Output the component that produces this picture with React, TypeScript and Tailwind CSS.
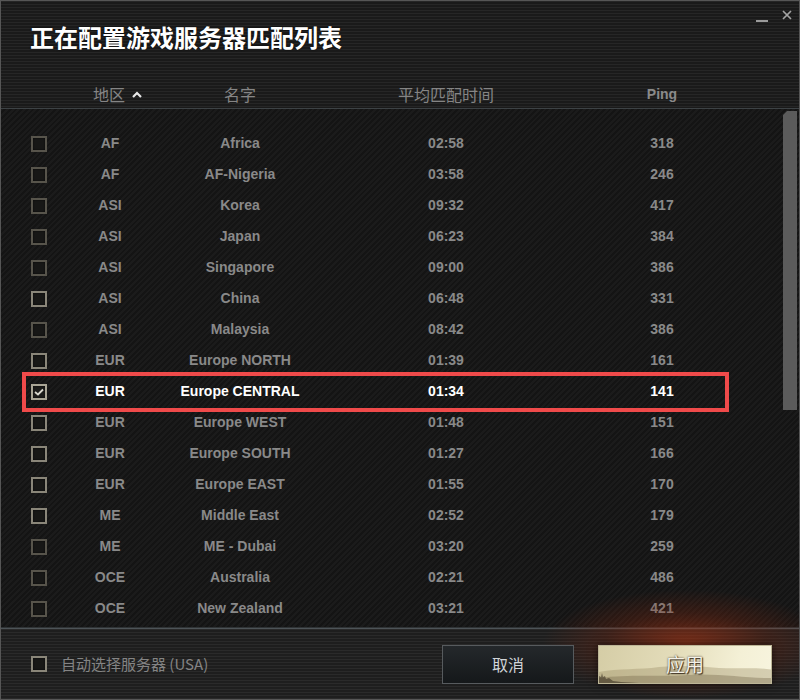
import React from "react";

type Row = { r: string; n: string; t: string; p: string; bright?: boolean; sel?: boolean };

const rows: Row[] = [
  { r: "AF", n: "Africa", t: "02:58", p: "318" },
  { r: "AF", n: "AF-Nigeria", t: "03:58", p: "246" },
  { r: "ASI", n: "Korea", t: "09:32", p: "417" },
  { r: "ASI", n: "Japan", t: "06:23", p: "384" },
  { r: "ASI", n: "Singapore", t: "09:00", p: "386" },
  { r: "ASI", n: "China", t: "06:48", p: "331", bright: true },
  { r: "ASI", n: "Malaysia", t: "08:42", p: "386" },
  { r: "EUR", n: "Europe NORTH", t: "01:39", p: "161", bright: true },
  { r: "EUR", n: "Europe CENTRAL", t: "01:34", p: "141", sel: true },
  { r: "EUR", n: "Europe WEST", t: "01:48", p: "151", bright: true },
  { r: "EUR", n: "Europe SOUTH", t: "01:27", p: "166", bright: true },
  { r: "EUR", n: "Europe EAST", t: "01:55", p: "170", bright: true },
  { r: "ME", n: "Middle East", t: "02:52", p: "179", bright: true },
  { r: "ME", n: "ME - Dubai", t: "03:20", p: "259" },
  { r: "OCE", n: "Australia", t: "02:21", p: "486" },
  { r: "OCE", n: "New Zealand", t: "03:21", p: "421" },
];

function Box({ checked, bright }: { checked?: boolean; bright?: boolean }) {
  const cls = checked
    ? "w-[16px] h-[16px] border-2 border-[#a9a595] bg-[#1c1c1a] flex items-center justify-center shadow-[inset_0_0_2px_rgba(0,0,0,0.8)]"
    : bright
    ? "w-[16px] h-[16px] border-2 border-[#8a8679] bg-[#181816] flex items-center justify-center shadow-[inset_0_0_2px_rgba(0,0,0,0.8)]"
    : "w-[16px] h-[16px] border-2 border-[#57544b] bg-[#171716] flex items-center justify-center shadow-[inset_0_0_2px_rgba(0,0,0,0.8)]";
  return (
    <div className={cls}>
      {checked && (
        <svg width="10" height="8" viewBox="0 0 10 8">
          <polyline points="1,4 4,6.5 9,1.5" fill="none" stroke="#d8d6cc" strokeWidth="1.8" />
        </svg>
      )}
    </div>
  );
}

export default function App() {
  const font = { fontFamily: '"Liberation Sans", "Noto Sans CJK SC", sans-serif' };
  const cjk = { fontFamily: '"Noto Sans CJK SC", "Liberation Sans", sans-serif' };
  return (
    <div
      className="w-[800px] h-[700px] border border-[#565656] flex flex-col overflow-hidden relative bg-[#1c1c1c]"
      style={font}
    >
      {/* Header */}
      <div className="h-[107px] relative flex flex-col bg-[repeating-linear-gradient(to_bottom,#262626_0px,#262626_1px,#1a1a1a_1px,#1a1a1a_3px)]">
        <div className="pl-[29px] pt-[20px] h-[80px]">
          <h1
            className="text-[24px] leading-[32px] font-bold text-white [text-shadow:0_0_2px_rgba(0,0,0,0.9)]"
            style={cjk}
          >
            正在配置游戏服务器匹配列表
          </h1>
        </div>
        {/* window controls */}
        <div className="absolute top-[7px] right-[7px] flex items-center gap-[14px]">
          <div className="w-[12px] h-[2px] bg-[#9a9a9a] mt-[12px]" />
          <svg width="10" height="10" viewBox="0 0 10 10">
            <path d="M1 1 L9 9 M9 1 L1 9" stroke="#a4a4a4" strokeWidth="1.7" />
          </svg>
        </div>
        {/* column headers */}
        <div className="flex items-center h-[26px] text-[16px] text-[#858585]" style={cjk}>
          <div className="w-[69px]" />
          <div className="w-[80px] flex items-center pl-[23px] gap-[7px]">
            <span>地区</span>
            <svg width="10" height="7" viewBox="0 0 10 7">
              <polyline points="1,6 5,2 9,6" fill="none" stroke="#e8e8e8" strokeWidth="2.2" />
            </svg>
          </div>
          <div className="w-[180px] text-center">名字</div>
          <div className="w-[232px] text-center">平均匹配时间</div>
          <div className="w-[200px] text-center text-[14px] font-bold text-[#8a8a8a]" style={font}>
            Ping
          </div>
        </div>
      </div>
      <div className="h-[1px] bg-[#3d4245]" />

      {/* List */}
      <div className="h-[518px] relative flex bg-[repeating-linear-gradient(135deg,#1b1b1b_0px,#1b1b1b_2px,#141414_2px,#141414_4px)]">
        <div className="flex-1 pt-[19px] flex flex-col">
          {rows.map((row, i) => (
            <div
              key={i}
              className={
                row.sel
                  ? "h-[31px] flex items-center text-[14px] font-bold text-white"
                  : "h-[31px] flex items-center text-[14px] font-bold text-[#898989]"
              }
            >
              <div className="w-[30px]" />
              <Box checked={row.sel} bright={row.bright} />
              <div className="w-[23px]" />
              <div className="w-[80px] text-center">{row.r}</div>
              <div className="w-[180px] text-center">{row.n}</div>
              <div className="w-[232px] text-center">{row.t}</div>
              <div className="w-[200px] text-center">{row.p}</div>
            </div>
          ))}
        </div>
        {/* scrollbar */}
        <div className="w-[17px] pt-[2px] pr-[2px] flex justify-end">
          <div className="w-[14px] h-[299px] bg-[#5b5b5b] [clip-path:polygon(4px_0,100%_0,100%_100%,0_100%,0_4px)]" />
        </div>
        {/* highlight annotation */}
        <div className="absolute left-[21px] top-[263px] w-[707px] h-[40px] border-[4px] border-[#ef4a4a] pointer-events-none" />
      </div>

      {/* Footer */}
      <div className="h-[1px] bg-[#2f3335]" />
      <div className="h-[1px] bg-[#4d5357]" />
      <div className="h-[70px] relative flex items-center bg-[repeating-linear-gradient(to_bottom,#2a2a2a_0px,#2a2a2a_1px,#1e1e1e_1px,#1e1e1e_3px)]">
        <div className="absolute left-[540px] top-[-40px] w-[290px] h-[110px] pointer-events-none bg-[radial-gradient(ellipse_at_center,rgba(180,55,20,0.6)_0%,rgba(130,40,15,0.3)_40%,rgba(0,0,0,0)_70%)]" />
        <div className="pl-[30px] flex items-center relative">
          <Box bright />
          <span className="ml-[14px] text-[15px] text-[#848484]" style={cjk}>
            自动选择服务器 (USA)
          </span>
        </div>
        <div className="flex-1" />
        <div className="flex items-center gap-[24px] pr-[27px] relative">
          <button
            className="w-[132px] h-[39px] border border-[#575b5e] bg-[linear-gradient(to_bottom,#24282b,#15181a)] text-[16px] text-[#d0d4d8] flex items-center justify-center"
            style={cjk}
          >
            取消
          </button>
          <button className="w-[174px] h-[39px] relative overflow-hidden border border-[#bdb697] bg-[linear-gradient(100deg,#d5cda6_0%,#e4ddbb_45%,#f4f0d6_80%,#f7f4de_100%)] flex items-center justify-center shadow-[0_0_8px_rgba(0,0,0,0.6)]">
            <svg className="absolute inset-0" width="174" height="39" viewBox="0 0 174 39" preserveAspectRatio="none">
              <path d="M0 26 C20 22 40 24 60 21 C80 19 100 20 120 22 C140 23 160 21 174 24 L174 39 L0 39 Z" fill="rgba(150,135,95,0.35)" />
              <path d="M0 32 C30 28 60 31 90 29 C120 27 150 33 174 32 L174 39 L0 39 Z" fill="rgba(110,95,65,0.35)" />
              <path d="M0 39 L0 30 L2 31 L3 27 L4 31 L6 30 L7 33 L10 32 L14 35 L22 36 L40 37 L60 38 L60 39 Z" fill="rgba(60,50,35,0.6)" />
            </svg>
            <span
              className="relative text-[19px] text-[#f4f1e8] [text-shadow:0_0_2px_#3a3020,1px_1px_1px_#3a3020]"
              style={cjk}
            >
              应用
            </span>
          </button>
        </div>
      </div>
    </div>
  );
}
